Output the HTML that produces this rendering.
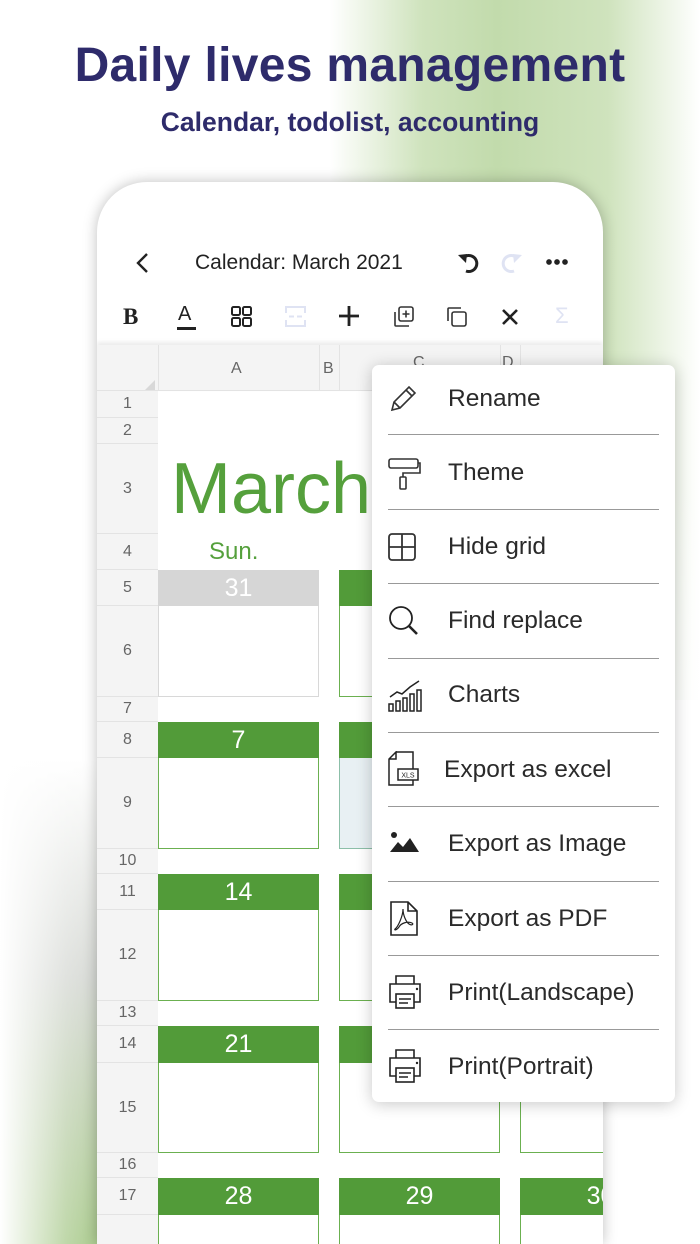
<!DOCTYPE html>
<html><head><meta charset="utf-8"><style>
*{margin:0;padding:0;box-sizing:border-box}
html,body{width:700px;height:1244px;overflow:hidden}
body{position:relative;background:#fff;font-family:"Liberation Sans",sans-serif}
.bg1{position:absolute;left:330px;top:0;width:370px;height:700px;background:linear-gradient(90deg,rgba(255,255,255,0) 0%,#cfe3bd 25%,#c2dbac 45%,#cfe3bd 75%,rgba(255,255,255,1) 100%)}
.bg1b{position:absolute;left:330px;top:0;width:370px;height:800px;background:linear-gradient(180deg,rgba(255,255,255,0) 60%,#fff 100%)}
.bg2{position:absolute;left:0;top:760px;width:110px;height:484px;background:linear-gradient(180deg,rgba(255,255,255,0),#d3d6d1 45%,#a4c785 100%)}
.bg2b{position:absolute;left:0;top:760px;width:110px;height:484px;background:linear-gradient(90deg,rgba(255,255,255,1) 0%,rgba(255,255,255,0.3) 60%,rgba(255,255,255,0) 100%)}
h1{position:absolute;left:0;width:700px;top:38px;text-align:center;font-size:48px;font-weight:bold;color:#2e2b6b;letter-spacing:0.3px}
h2{position:absolute;left:0;width:700px;top:107px;text-align:center;font-size:26.5px;font-weight:bold;color:#2e2b6b}
.phone{position:absolute;left:97px;top:182px;width:506px;height:1062px;background:#fff;border-radius:50px 50px 0 0;overflow:hidden;box-shadow:0 0 14px rgba(0,0,0,0.25)}
.a{position:absolute}
.t{font-size:21px;color:#222}
.rh{position:absolute;left:0;width:61px;background:#f4f4f4;border-bottom:1px solid #e3e3e3;color:#666;font-size:16px;text-align:center;display:flex;align-items:center;justify-content:center}
.gh{position:absolute;background:#529b39;color:#fff;font-size:25px;text-align:center;display:flex;align-items:center;justify-content:center}
.gb{position:absolute;border:1.5px solid #6bb050;border-top:none;background:#fff}
.menu{position:absolute;left:372px;top:365px;width:303px;height:737px;background:#fff;border-radius:7px;box-shadow:0 2px 16px rgba(0,0,0,0.22)}
.mi{position:absolute;left:76px;font-size:24.5px;color:#2a2a2a}
.sep{position:absolute;left:16px;width:271px;height:1px;background:#999}
.ic{position:absolute;left:16px}
</style></head><body>
<div class="bg1"></div><div class="bg1b"></div>
<div class="bg2"></div><div class="bg2b"></div>
<h1>Daily lives management</h1>
<h2>Calendar, todolist, accounting</h2>

<div class="phone">
 <svg class="a" style="left:38px;top:70px" width="16" height="22" viewBox="0 0 16 22"><path d="M12 2 L3 11 L12 20" fill="none" stroke="#222" stroke-width="2.4"/></svg>
 <div class="a t" style="left:98px;top:69px">Calendar: March 2021</div>
 <svg class="a" style="left:360px;top:70px" width="24" height="22" viewBox="0 0 24 22"><path d="M6 6 A8 8 0 1 1 9 19" fill="none" stroke="#222" stroke-width="3"/><path d="M1 3 L9 11 L10 2 Z" fill="#222"/></svg>
 <svg class="a" style="left:402px;top:70px" width="24" height="22" viewBox="0 0 24 22"><path d="M18 6 A8 8 0 1 0 15 19" fill="none" stroke="#dfe3f3" stroke-width="3"/><path d="M23 3 L15 11 L14 2 Z" fill="#dfe3f3"/></svg>
 <div class="a" style="left:449px;top:77px;width:22px;height:6px;background:radial-gradient(circle at 3px 3px,#222 2.6px,transparent 3px),radial-gradient(circle at 11px 3px,#222 2.6px,transparent 3px),radial-gradient(circle at 19px 3px,#222 2.6px,transparent 3px)"></div>
 <div class="a" style="left:26px;top:122px;font-family:'Liberation Serif',serif;font-weight:bold;font-size:23px;color:#222">B</div>
 <div class="a" style="left:81px;top:121px;font-size:20px;color:#222">A</div>
 <div class="a" style="left:80px;top:145px;width:19px;height:2.5px;background:#222"></div>
 <svg class="a" style="left:134px;top:124px" width="22" height="22"><g fill="none" stroke="#222" stroke-width="2"><rect x="1" y="1" width="8" height="8" rx="1.5"/><rect x="12" y="1" width="8" height="8" rx="1.5"/><rect x="1" y="12" width="8" height="8" rx="1.5"/><rect x="12" y="12" width="8" height="8" rx="1.5"/></g></svg>
 <svg class="a" style="left:188px;top:124px" width="22" height="22"><g fill="none" stroke="#dfe3f3" stroke-width="2"><path d="M1 7V1H20V7M1 14V20H20V14M4 10.5H9M12 10.5H17"/></g></svg>
 <svg class="a" style="left:240px;top:122px" width="24" height="24"><path d="M12 2V22M2 12H22" stroke="#222" stroke-width="2.8"/></svg>
 <svg class="a" style="left:296px;top:124px" width="22" height="22"><g fill="none" stroke="#333" stroke-width="1.6"><rect x="6" y="1" width="14" height="14" rx="2"/><path d="M2 6V19a1 1 0 0 0 1 1H16M13 4.5V11.5M9.5 8H16.5"/></g></svg>
 <svg class="a" style="left:349px;top:124px" width="22" height="22"><g fill="none" stroke="#333" stroke-width="1.6"><rect x="6" y="6" width="14" height="14" rx="2"/><path d="M2 15V3a1 1 0 0 1 1-1H15"/></g></svg>
 <svg class="a" style="left:404px;top:126px" width="18" height="18"><path d="M2 2L16 16M16 2L2 16" stroke="#222" stroke-width="2.6"/></svg>
 <div class="a" style="left:458px;top:121px;font-size:22px;color:#dfe3f3">Σ</div>

 <div class="a" style="left:0;top:163px;width:506px;height:46px;background:#f4f4f4;border-bottom:1px solid #e3e3e3;box-shadow:0 -3px 4px rgba(0,0,0,0.08)"></div>
 <div class="a" style="left:61px;top:163px;width:1px;height:46px;background:#e3e3e3"></div>
 <div class="a" style="left:222px;top:163px;width:1px;height:46px;background:#e3e3e3"></div>
 <div class="a" style="left:242px;top:163px;width:1px;height:46px;background:#e3e3e3"></div>
 <div class="a" style="left:403px;top:163px;width:1px;height:46px;background:#e3e3e3"></div>
 <div class="a" style="left:423px;top:163px;width:1px;height:46px;background:#e3e3e3"></div>
 <div class="a" style="left:48px;top:198px;width:0;height:0;border-left:10px solid transparent;border-bottom:10px solid #d8d8d8"></div>
 <div class="a" style="left:134px;top:178px;color:#666;font-size:16px">A</div>
 <div class="a" style="left:226px;top:178px;color:#666;font-size:16px">B</div>
 <div class="a" style="left:316px;top:172px;color:#666;font-size:16px">C</div>
 <div class="a" style="left:405px;top:172px;color:#666;font-size:16px">D</div>

 <div class="rh" style="top:209px;height:27px">1</div>
 <div class="rh" style="top:236px;height:26px">2</div>
 <div class="rh" style="top:262px;height:90px">3</div>
 <div class="rh" style="top:352px;height:36px">4</div>
 <div class="rh" style="top:388px;height:36px">5</div>
 <div class="rh" style="top:424px;height:91px">6</div>
 <div class="rh" style="top:515px;height:25px">7</div>
 <div class="rh" style="top:540px;height:36px">8</div>
 <div class="rh" style="top:576px;height:91px">9</div>
 <div class="rh" style="top:667px;height:25px">10</div>
 <div class="rh" style="top:692px;height:36px">11</div>
 <div class="rh" style="top:728px;height:91px">12</div>
 <div class="rh" style="top:819px;height:25px">13</div>
 <div class="rh" style="top:844px;height:37px">14</div>
 <div class="rh" style="top:881px;height:90px">15</div>
 <div class="rh" style="top:971px;height:25px">16</div>
 <div class="rh" style="top:996px;height:37px">17</div>
 <div class="rh" style="top:1033px;height:60px"></div>

 <div class="a" style="left:74px;top:262px;font-size:72px;color:#55a03c;line-height:90px">March</div>
 <div class="a" style="left:112px;top:356px;font-size:24px;color:#55a03c">Sun.</div>

 <div class="gh" style="left:61px;top:388px;width:161px;height:36px;background:#d6d6d6">31</div>
 <div class="gb" style="left:61px;top:424px;width:161px;height:91px;border-color:#d8d8d8"></div>
 <div class="gh" style="left:242px;top:388px;width:161px;height:36px"></div>
 <div class="gb" style="left:242px;top:424px;width:161px;height:91px"></div>
 <div class="gh" style="left:423px;top:388px;width:90px;height:36px"></div>
 <div class="gh" style="left:61px;top:540px;width:161px;height:36px">7</div>
 <div class="gb" style="left:61px;top:576px;width:161px;height:91px"></div>
 <div class="gh" style="left:242px;top:540px;width:161px;height:36px"></div>
 <div class="gb" style="left:242px;top:576px;width:161px;height:91px;background:#e8f0f3;border-color:#8cbfa8"></div>
 <div class="gh" style="left:61px;top:692px;width:161px;height:36px">14</div>
 <div class="gb" style="left:61px;top:728px;width:161px;height:91px"></div>
 <div class="gh" style="left:242px;top:692px;width:161px;height:36px"></div>
 <div class="gb" style="left:242px;top:728px;width:161px;height:91px"></div>
 <div class="gh" style="left:61px;top:844px;width:161px;height:37px">21</div>
 <div class="gb" style="left:61px;top:881px;width:161px;height:90px"></div>
 <div class="gh" style="left:242px;top:844px;width:161px;height:37px"></div>
 <div class="gb" style="left:242px;top:881px;width:161px;height:90px"></div>
 <div class="gb" style="left:423px;top:881px;width:161px;height:90px"></div>
 <div class="gh" style="left:61px;top:996px;width:161px;height:37px">28</div>
 <div class="gb" style="left:61px;top:1033px;width:161px;height:90px"></div>
 <div class="gh" style="left:242px;top:996px;width:161px;height:37px">29</div>
 <div class="gb" style="left:242px;top:1033px;width:161px;height:90px"></div>
 <div class="gh" style="left:423px;top:996px;width:161px;height:37px">30</div>
 <div class="gb" style="left:423px;top:1033px;width:161px;height:90px"></div>
</div>

<div class="menu">
 <svg class="ic" style="top:18px" width="32" height="30" viewBox="0 0 32 30"><g fill="none" stroke="#333" stroke-width="1.6"><path d="M4 27L6 19L21 4L27 10L12 25Z M18 7L24 13 M6 19L12 25"/></g></svg>
 <div class="mi" style="top:20px">Rename</div>
 <div class="sep" style="top:69px"></div>
 <svg class="ic" style="top:93px" width="34" height="32" viewBox="0 0 34 32"><g fill="none" stroke="#333" stroke-width="1.6"><rect x="1" y="1" width="29" height="9" rx="2"/><path d="M30 5H32V15H15V19"/><rect x="12" y="19" width="6" height="12" rx="1"/></g></svg>
 <div class="mi" style="top:94px">Theme</div>
 <div class="sep" style="top:144px"></div>
 <svg class="ic" style="top:168px" width="30" height="30" viewBox="0 0 30 30"><g fill="none" stroke="#333" stroke-width="1.8"><rect x="1" y="1" width="26" height="26" rx="3"/><path d="M14 1V27M1 14H27"/></g></svg>
 <div class="mi" style="top:168px">Hide grid</div>
 <div class="sep" style="top:218px"></div>
 <svg class="ic" style="top:240px" width="32" height="32" viewBox="0 0 32 32"><g fill="none" stroke="#222" stroke-width="1.8"><circle cx="13" cy="13" r="11"/><path d="M21 21L29 29" stroke-width="2.6"/></g></svg>
 <div class="mi" style="top:242px">Find replace</div>
 <div class="sep" style="top:293px"></div>
 <svg class="ic" style="top:314px" width="34" height="34" viewBox="0 0 34 34"><g fill="none" stroke="#222" stroke-width="1.5"><path d="M2 18L9 13L14 15L22 8L31 2"/><rect x="1" y="25" width="4" height="7"/><rect x="8" y="22" width="4" height="10"/><rect x="15" y="19" width="4" height="13"/><rect x="22" y="15" width="4" height="17"/><rect x="29" y="11" width="4" height="21"/></g></svg>
 <div class="mi" style="top:316px">Charts</div>
 <div class="sep" style="top:367px"></div>
 <svg class="ic" style="top:386px" width="32" height="36" viewBox="0 0 32 36"><g fill="none" stroke="#222" stroke-width="1.5"><path d="M8 1H25V18M25 29V34H1V8L8 1V8H1"/><rect x="10" y="18" width="20" height="11"/></g><text x="20" y="26.5" font-size="7" text-anchor="middle" fill="#222" font-family="Liberation Sans">XLS</text></svg>
 <div class="mi" style="left:72px;top:391px">Export as excel</div>
 <div class="sep" style="top:441px"></div>
 <svg class="ic" style="top:465px" width="32" height="24" viewBox="0 0 32 24"><circle cx="6" cy="5" r="3" fill="#222"/><path d="M2 22L10 12L15 17L22 8L31 22Z" fill="#222"/></svg>
 <div class="mi" style="top:465px">Export as Image</div>
 <div class="sep" style="top:516px"></div>
 <svg class="ic" style="top:536px" width="32" height="36" viewBox="0 0 32 36"><g fill="none" stroke="#222" stroke-width="1.6"><path d="M3 1H20L29 10V34H3Z M20 1V10H29"/><path d="M15 8C15 15 10 26 7 28C6 29 8 30 11 26C13 22 20 20 24 22C26 23 24 25 21 23C18 21 15 14 15 8Z" stroke-width="1.2"/></g></svg>
 <div class="mi" style="top:540px">Export as PDF</div>
 <div class="sep" style="top:590px"></div>
 <svg class="ic" style="top:610px" width="34" height="34" viewBox="0 0 34 34"><g fill="none" stroke="#222" stroke-width="1.6"><path d="M8 9V1H26V9"/><path d="M8 27H2V9H32V27H26"/><rect x="8" y="19" width="18" height="14"/><path d="M11 24H23M11 28H20"/></g><circle cx="29" cy="14" r="1.2" fill="#222"/></svg>
 <div class="mi" style="top:614px">Print(Landscape)</div>
 <div class="sep" style="top:664px"></div>
 <svg class="ic" style="top:684px" width="34" height="34" viewBox="0 0 34 34"><g fill="none" stroke="#222" stroke-width="1.6"><path d="M8 9V1H26V9"/><path d="M8 27H2V9H32V27H26"/><rect x="8" y="19" width="18" height="14"/><path d="M11 24H23M11 28H20"/></g><circle cx="29" cy="14" r="1.2" fill="#222"/></svg>
 <div class="mi" style="top:688px">Print(Portrait)</div>
</div>
</body></html>
